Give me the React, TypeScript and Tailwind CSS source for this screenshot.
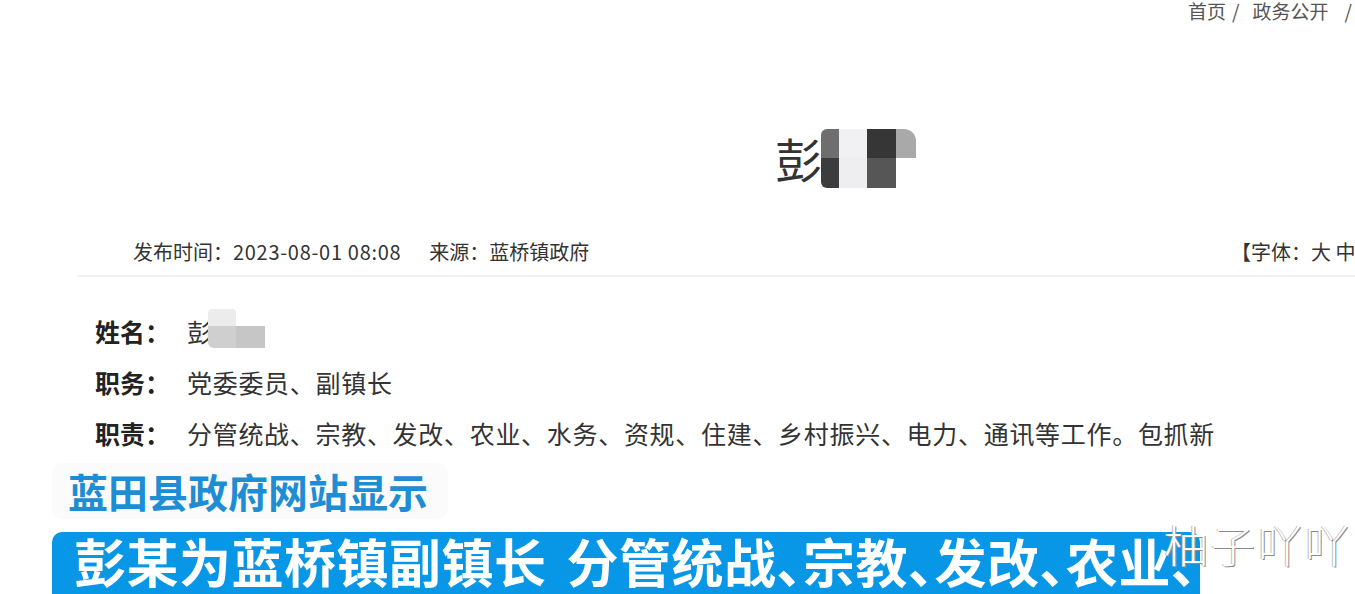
import React from 'react';

// 打码色块（两行四列）
const mosaicTop = ['bg-[#6e6e6e] w-[18px] rounded-tl-[6px]', 'bg-[#f1f1f3] w-[28px]', 'bg-[#363636] w-[29px]', 'bg-[#a9a9a9] w-[20px] rounded-tr-[12px]'];
const mosaicBottom = ['bg-[#3c3c3c] w-[18px] rounded-bl-[6px]', 'bg-[#eeeef0] w-[28px]', 'bg-[#565656] w-[29px]', 'bg-transparent w-[20px]'];

// 人员信息
const infoRows = [
  { label: '姓名：', value: 'name' },
  { label: '职务：', value: '党委委员、副镇长' },
  { label: '职责：', value: '分管统战、宗教、发改、农业、水务、资规、住建、乡村振兴、电力、通讯等工作。包抓新' },
];

export default function App() {
  return (
    <div className="relative w-[1355px] h-[594px] overflow-hidden bg-white font-['Noto_Sans_CJK_SC','Noto_Sans',sans-serif] text-[#333]">
      {/* 面包屑 */}
      <div className="flex items-center h-[22px] pl-[1188px] text-[19px] leading-[22px] text-[#555] whitespace-nowrap">
        <span>首页</span>
        <span className="ml-[6px]">/</span>
        <span className="ml-[13px]">政务公开</span>
        <span className="ml-[16px]">/</span>
      </div>

      {/* 标题 */}
      <div className="flex items-center h-[60px] mt-[106px] pl-[775px]">
        <span className="text-[47px] leading-[60px] text-[#333]">彭</span>
        <div className="flex flex-col ml-[-1px]">
          <div className="flex h-[29px]">
            {mosaicTop.map((c, i) => (
              <div key={i} className={c} />
            ))}
          </div>
          <div className="flex h-[30px]">
            {mosaicBottom.map((c, i) => (
              <div key={i} className={c} />
            ))}
          </div>
        </div>
      </div>

      {/* 发布信息 */}
      <div className="flex h-[30px] mt-[49px] text-[20px] leading-[30px] whitespace-nowrap">
        <div className="pl-[133px] flex">
          <span>发布时间：</span>
          <span className="tracking-[0.7px]">2023-08-01 08:08</span>
          <span className="ml-[28px]">来源：蓝桥镇政府</span>
        </div>
        <div className="ml-auto w-[124px] shrink-0 overflow-visible">【字体：大 中 小】</div>
      </div>

      {/* 分隔线 */}
      <div className="ml-[78px] mt-[8px] h-[2px] bg-[#f1f1f1]" />

      {/* 人员信息 */}
      <div className="mt-[29px] pl-[95px]">
        {infoRows.map((row) => (
          <div key={row.label} className="flex items-center h-[51px] text-[25px] leading-[51px] whitespace-nowrap">
            <span className="w-[92px] font-bold text-[#222]">{row.label}</span>
            {row.value === 'name' ? (
              <span className="flex items-center">
                <span className="text-[#333]">彭</span>
                <span className="flex flex-col ml-[-4px] mt-[-6px]">
                  <span className="block w-[28px] h-[17px] bg-[#ececec] rounded-t-[4px]" />
                  <span className="flex h-[22px]">
                    <span className="block w-[28px] bg-[#cfcfcf] rounded-bl-[6px]" />
                    <span className="block w-[29px] bg-[#c6c6c6]" />
                  </span>
                </span>
              </span>
            ) : (
              <span className="tracking-[0.7px]">{row.value}</span>
            )}
          </div>
        ))}
      </div>

      {/* 字幕：来源 */}
      <div className="ml-[52px] mt-[4px] w-[396px] h-[56px] rounded-[10px] bg-[#fbfbfb] flex items-center pl-[16px]">
        <span className="text-[40px] leading-[44px] font-bold text-[#1f8dd3] whitespace-nowrap">蓝田县政府网站显示</span>
      </div>

      {/* 字幕：主标题 */}
      <div className="ml-[52px] mt-[13px] w-[1148px] h-[70px] rounded-t-[10px] bg-[#0896e6] pl-[22px] pt-[2px] overflow-hidden">
        <span className="block text-[52px] leading-[54px] font-bold tracking-[0.5px] text-white whitespace-nowrap [font-feature-settings:'palt']">
          彭某为蓝桥镇副镇长<span className="inline-block w-[20px]" />分管统战、宗教、发改、农业、
        </span>
      </div>

      {/* 水印 */}
      <div className="absolute left-[1164px] top-[518px] text-[44px] leading-[52px] font-light tracking-[3px] text-white whitespace-nowrap [text-shadow:1px_1px_0_#8a8a8a,-1px_0_0_#bbbbbb]">
        柚子吖吖
      </div>
    </div>
  );
}
